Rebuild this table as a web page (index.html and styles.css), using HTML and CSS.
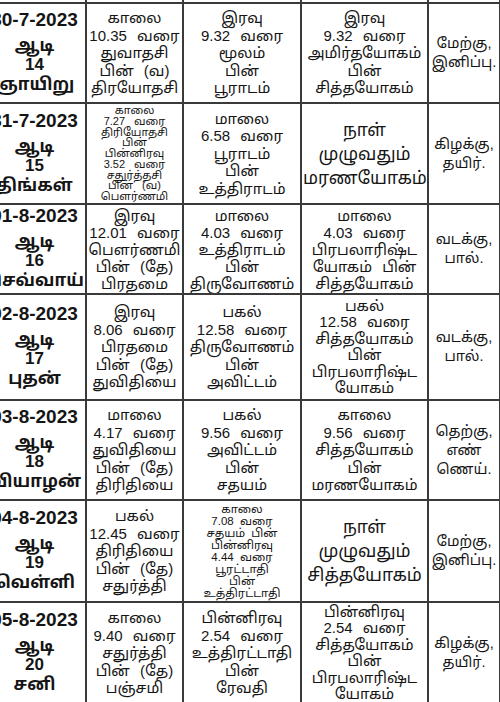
FILE: index.html
```html
<!DOCTYPE html>
<html lang="ta">
<head>
<meta charset="utf-8">
<title>ஆடி பஞ்சாங்கம்</title>
<link rel="stylesheet" href="styles.css">
</head>
<body>
<table class="cal">
  <colgroup>
    <col class="c1"><col class="c2"><col class="c3"><col class="c4"><col class="c5">
  </colgroup>
  <tr class="stub"><td></td><td></td><td></td><td></td><td></td></tr>
  <tr class="r1">
    <td class="day"><div class="date">30-7-2023</div><div class="mo">ஆடி</div><div>14</div><div class="wd">ஞாயிறு</div></td>
    <td class="tx">காலை<br>10.35 வரை<br>துவாதசி<br>பின் (வ)<br>திரயோதசி</td>
    <td class="tx">இரவு<br>9.32 வரை<br>மூலம்<br>பின்<br>பூராடம்</td>
    <td class="tx">இரவு<br>9.32 வரை<br>அமிர்தயோகம்<br>பின்<br>சித்தயோகம்</td>
    <td class="dir">மேற்கு,<br>இனிப்பு.</td>
  </tr>
  <tr class="r2">
    <td class="day"><div class="date">31-7-2023</div><div class="mo">ஆடி</div><div>15</div><div class="wd">திங்கள்</div></td>
    <td class="tx small">காலை<br>7.27 வரை<br>திரியோதசி<br>பின்<br>பின்னிரவு<br>3.52 வரை<br>சதுர்த்தசி<br>பின் (வ)<br>பௌர்ணமி</td>
    <td class="tx">மாலை<br>6.58 வரை<br>பூராடம்<br>பின்<br>உத்திராடம்</td>
    <td class="tx big">நாள்<br>முழுவதும்<br>மரணயோகம்</td>
    <td class="dir">கிழக்கு,<br>தயிர்.</td>
  </tr>
  <tr class="r3">
    <td class="day"><div class="date">01-8-2023</div><div class="mo">ஆடி</div><div>16</div><div class="wd">செவ்வாய்</div></td>
    <td class="tx">இரவு<br>12.01 வரை<br>பௌர்ணமி<br>பின் (தே)<br>பிரதமை</td>
    <td class="tx">மாலை<br>4.03 வரை<br>உத்திராடம்<br>பின்<br>திருவோணம்</td>
    <td class="tx">மாலை<br>4.03 வரை<br>பிரபலாரிஷ்ட<br>யோகம் பின்<br>சித்தயோகம்</td>
    <td class="dir">வடக்கு,<br>பால்.</td>
  </tr>
  <tr class="r4">
    <td class="day"><div class="date">02-8-2023</div><div class="mo">ஆடி</div><div>17</div><div class="wd">புதன்</div></td>
    <td class="tx">இரவு<br>8.06 வரை<br>பிரதமை<br>பின் (தே)<br>துவிதியை</td>
    <td class="tx">பகல்<br>12.58 வரை<br>திருவோணம்<br>பின்<br>அவிட்டம்</td>
    <td class="tx six">பகல்<br>12.58 வரை<br>சித்தயோகம்<br>பின்<br>பிரபலாரிஷ்ட<br>யோகம்</td>
    <td class="dir">வடக்கு,<br>பால்.</td>
  </tr>
  <tr class="r5">
    <td class="day"><div class="date">03-8-2023</div><div class="mo">ஆடி</div><div>18</div><div class="wd">வியாழன்</div></td>
    <td class="tx">மாலை<br>4.17 வரை<br>துவிதியை<br>பின் (தே)<br>திரிதியை</td>
    <td class="tx">பகல்<br>9.56 வரை<br>அவிட்டம்<br>பின்<br>சதயம்</td>
    <td class="tx">காலை<br>9.56 வரை<br>சித்தயோகம்<br>பின்<br>மரணயோகம்</td>
    <td class="dir">தெற்கு,<br>எண்<br>ணெய்.</td>
  </tr>
  <tr class="r6">
    <td class="day"><div class="date">04-8-2023</div><div class="mo">ஆடி</div><div>19</div><div class="wd">வெள்ளி</div></td>
    <td class="tx">பகல்<br>12.45 வரை<br>திரிதியை<br>பின் (தே)<br>சதுர்த்தி</td>
    <td class="tx mid">காலை<br>7.08 வரை<br>சதயம் பின்<br>பின்னிரவு<br>4.44 வரை<br>பூரட்டாதி<br>பின்<br>உத்திரட்டாதி</td>
    <td class="tx big">நாள்<br>முழுவதும்<br>சித்தயோகம்</td>
    <td class="dir">மேற்கு,<br>இனிப்பு.</td>
  </tr>
  <tr class="r7">
    <td class="day"><div class="date">05-8-2023</div><div class="mo">ஆடி</div><div>20</div><div class="wd">சனி</div></td>
    <td class="tx">காலை<br>9.40 வரை<br>சதுர்த்தி<br>பின் (தே)<br>பஞ்சமி</td>
    <td class="tx">பின்னிரவு<br>2.54 வரை<br>உத்திரட்டாதி<br>பின்<br>ரேவதி</td>
    <td class="tx six">பின்னிரவு<br>2.54 வரை<br>சித்தயோகம்<br>பின்<br>பிரபலாரிஷ்ட<br>யோகம்</td>
    <td class="dir">கிழக்கு,<br>தயிர்.</td>
  </tr>
</table>
</body>
</html>
```
FILE: styles.css
```css
html, body {
  margin: 0;
  padding: 0;
  background: #ffffff;
  overflow: hidden;
}
body {
  width: 500px;
  height: 702px;
  font-family: "Liberation Sans", "Noto Sans Tamil", "Lohit Tamil", "Noto Sans", sans-serif;
  color: #151515;
}
.cal {
  border-collapse: collapse;
  table-layout: fixed;
  width: 517px;
  margin-left: -18px;
}
.c1 { width: 103px; }
.c2 { width: 97px; }
.c3 { width: 118px; }
.c4 { width: 127px; }
.c5 { width: 72px; }
.cal td {
  border: 2px solid #3a3a3a;
  padding: 0 1px;
  text-align: center;
  vertical-align: middle;
  overflow: hidden;
}
.stub td {
  height: 2px;
  border-top: none;
  padding: 0;
}
.r1 td { height: 98px; }
.r2 td { height: 99px; }
.r3 td { height: 86px; }
.r4 td { height: 104px; }
.r5 td { height: 98px; }
.r6 td { height: 100px; }
.r7 td { height: 100px; }
.day {
  font-weight: bold;
  font-size: 17px;
  line-height: 17px;
}
.day .date {
  font-size: 19px;
  line-height: 22px;
  margin-bottom: 5px;
}
.day .mo {
  line-height: 20px;
}
.day .wd {
  line-height: 24px;
}
.tx {
  font-size: 15px;
  line-height: 17.5px;
  word-spacing: 6px;
}
.r3 .tx { line-height: 17px; }
.tx.six { line-height: 16.5px; }
.tx.big {
  font-size: 17.5px;
  line-height: 24px;
}
.tx.small {
  font-size: 11px;
  line-height: 10.7px;
  word-spacing: 6px;
}
.tx.mid {
  font-size: 11.5px;
  line-height: 12px;
  word-spacing: 3px;
}
.dir {
  font-size: 14.5px;
  line-height: 19px;
}
```
